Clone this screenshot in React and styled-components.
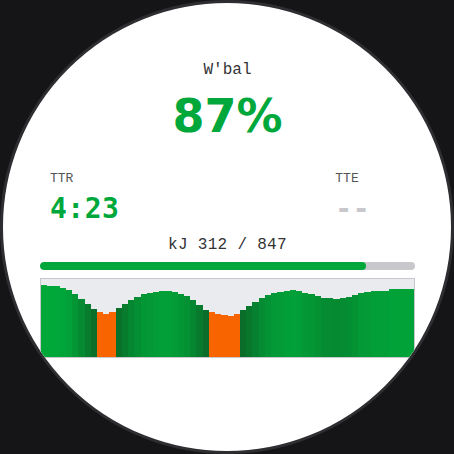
import React from "react";
import styled, { createGlobalStyle } from "styled-components";

const GlobalStyle = createGlobalStyle`
  html, body { margin: 0; padding: 0; background: #151517; }
  #root { width: 454px; height: 454px; }
`;

const MONO = `"Liberation Mono", "DejaVu Sans Mono", monospace`;
const MONO_BOLD = `"DejaVu Sans Mono", "Liberation Mono", monospace`;
const SANS = `"DejaVu Sans", "Liberation Sans", sans-serif`;
const GREEN = "#00a83c";

const Face = styled.div`
  width: 454px;
  height: 454px;
  box-sizing: border-box;
  border: 3px solid #2e2e32;
  border-radius: 50%;
  background: #ffffff;
  overflow: hidden;
  display: flex;
  flex-direction: column;
  align-items: stretch;
  padding: 59px 36px 0 37px;
`;

const Title = styled.div`
  font-family: ${MONO};
  font-size: 16px;
  line-height: 16px;
  color: #333336;
  text-align: center;
`;

const BigValue = styled.div`
  margin-top: 15px;
  font-family: ${SANS};
  font-weight: bold;
  font-size: 46px;
  line-height: 46px;
  color: ${GREEN};
  text-align: center;
`;

const StatsRow = styled.div`
  margin-top: 33px;
  display: flex;
  justify-content: space-between;
  padding: 0 45px 0 10px;
`;

const Stat = styled.div`
  display: flex;
  flex-direction: column;
  gap: 10px;
`;

const StatLabel = styled.div`
  font-family: ${MONO};
  font-size: 13px;
  line-height: 13px;
  color: #555558;
`;

const StatValue = styled.div`
  font-family: ${MONO_BOLD};
  font-weight: bold;
  font-size: 28px;
  line-height: 28px;
  letter-spacing: 0.5px;
  color: ${(p) => (p.$muted ? "#c8c8cc" : GREEN)};
`;

const Energy = styled.div`
  margin-top: 14px;
  font-family: ${MONO};
  font-size: 16px;
  line-height: 16px;
  letter-spacing: 0.3px;
  color: #333336;
  text-align: center;
`;

const Track = styled.div`
  margin-top: 9px;
  height: 8px;
  border-radius: 4px;
  background: #c8c8cc;
  overflow: hidden;
`;

const Fill = styled.div`
  height: 100%;
  border-radius: 4px;
  background: ${GREEN};
`;

const Chart = styled.div`
  margin-top: 8px;
  height: 80px;
  box-sizing: border-box;
  border: 1px solid #c8c8cc;
  background: #eaebef;
  display: flex;
  align-items: flex-end;
`;

const Bar = styled.div`
  flex: 1 1 0;
`;

const tops = [
  285, 286, 286, 288, 290, 294, 299, 304, 309, 312, 314, 312, 308, 304, 300,
  297, 294, 293, 292, 291, 291, 292, 294, 296, 300, 305, 310, 312, 314, 315,
  316, 314, 310, 306, 302, 298, 295, 293, 292, 291, 290, 291, 293, 294, 296,
  298, 298, 299, 298, 297, 295, 293, 292, 291, 291, 291, 289, 289, 289, 289,
];

function barColor(h) {
  if (h < 46) return "#f86400";
  const t = Math.max(0, Math.min(1, (h - 46) / 24));
  const dark = [10, 106, 40];
  const bright = [0, 168, 58];
  const c = dark.map((d, i) => Math.round(d + (bright[i] - d) * t));
  return `rgb(${c[0]}, ${c[1]}, ${c[2]})`;
}

export default function App() {
  const pct = 87;
  return (
    <>
      <GlobalStyle />
      <Face>
        <Title>W'bal</Title>
        <BigValue>{pct}%</BigValue>
        <StatsRow>
          <Stat>
            <StatLabel>TTR</StatLabel>
            <StatValue>4:23</StatValue>
          </Stat>
          <Stat>
            <StatLabel>TTE</StatLabel>
            <StatValue $muted>--</StatValue>
          </Stat>
        </StatsRow>
        <Energy>kJ 312 / 847</Energy>
        <Track>
          <Fill style={{ width: `${pct}%` }} />
        </Track>
        <Chart>
          {tops.map((t, i) => {
            const h = 357 - t;
            return (
              <Bar key={i} style={{ height: `${h}px`, background: barColor(h) }} />
            );
          })}
        </Chart>
      </Face>
    </>
  );
}
